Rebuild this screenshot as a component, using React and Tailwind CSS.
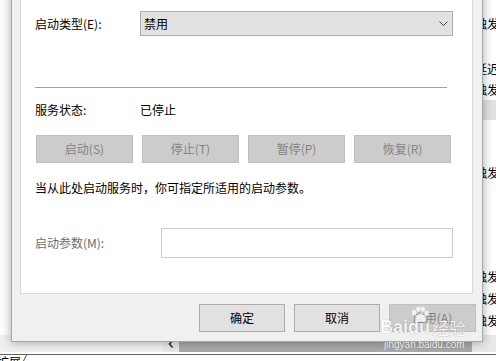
import React from "react";

function Btn({ children, disabled, className = "" }) {
  return (
    <div
      className={
        "flex items-center justify-center h-[28px] border leading-none " +
        (disabled
          ? "bg-[#cccccc] border-[#bfbfbf] text-[#838383] "
          : "bg-[#e1e1e1] border-[#adadad] text-black ") +
        className
      }
    >
      {children}
    </div>
  );
}

function ListRow({ h, text, className = "" }) {
  return (
    <div className={"flex items-center pl-[475px] whitespace-nowrap leading-none " + h + " " + className}>
      {text}
    </div>
  );
}

export default function App() {
  return (
    <div className="relative w-[496px] h-[361px] overflow-hidden bg-white text-[12px] text-black font-['Noto_Sans_CJK_SC',sans-serif]">
      {/* background window */}
      <div className="flex flex-col h-full">
        <div className="h-[335px] flex flex-col overflow-hidden">
          <div className="h-[13px] shrink-0" />
          <ListRow h="h-[22px] shrink-0" text="触发器启动)" />
          <div className="h-[23px] shrink-0" />
          <ListRow h="h-[22px] shrink-0" text="延迟启动)" />
          <ListRow h="h-[20px] shrink-0" text="触发器启动)" />
          <div className="h-[20px] shrink-0 ml-[472px] bg-[#e3e3e3]" />
          <div className="h-[42px] shrink-0" />
          <ListRow h="h-[22px] shrink-0" text="触发器启动)" />
          <div className="h-[82px] shrink-0" />
          <ListRow h="h-[22px] shrink-0" text="触发器启动)" />
          <ListRow h="h-[22px] shrink-0" text="触发器启动)" />
          <ListRow h="h-[21px] shrink-0" text="触发器启动)" />
        </div>
        {/* horizontal scrollbar */}
        <div className="h-[17px] flex shrink-0">
          <div className="w-[163px] bg-[#f0f0f0]" />
          <div className="w-[16px] bg-[#e8e8e8] flex items-end justify-center pb-[4px]">
            <svg width="6" height="8" viewBox="0 0 6 8">
              <path d="M4.5 0.5 L1.5 4 L4.5 7.5" stroke="#333" strokeWidth="1.6" fill="none" />
            </svg>
          </div>
          <div className="w-[293px] bg-[#a9a9a9]" />
          <div className="flex-1 bg-[#e8e8e8]" />
        </div>
        <div className="h-[2px] shrink-0 bg-white" />
        <div className="h-[1px] shrink-0 bg-[#646464]" />
        <div className="h-[6px] shrink-0 overflow-hidden flex items-start">
          <div className="ml-[-3px] mt-[1px] leading-[12px] text-[12px]">扩展</div>
          <svg width="6" height="6" className="ml-[2px]" viewBox="0 0 6 6">
            <path d="M0.5 6 L3.5 0" stroke="#444" strokeWidth="1" fill="none" />
          </svg>
        </div>
      </div>

      {/* dialog */}
      <div className="absolute left-[11px] top-[-40px] w-[472px] h-[382px] box-border border border-[#a8a8a8] bg-[#f0f0f0] shadow-[0_0_10px_rgba(0,0,0,0.35)] flex flex-col">
        <div className="ml-[8px] mr-[9px] mt-[9px] h-[324px] box-border border border-[#d9d9d9] bg-white pl-[14px] pr-[19px] pt-[40px] flex flex-col">
          {/* startup type */}
          <div className="flex items-center h-[25px]">
            <div className="w-[105px] leading-none">启动类型(E):</div>
            <div className="flex-1 h-[25px] box-border border border-[#adadad] bg-[#e1e1e1] flex items-center pl-[3px] pr-[4px]">
              <span className="flex-1 leading-none">禁用</span>
              <svg width="9" height="5" viewBox="0 0 9 5">
                <path d="M0.5 0.5 L4.5 4.5 L8.5 0.5" stroke="#444" strokeWidth="1" fill="none" />
              </svg>
            </div>
          </div>
          <div className="mt-[51px] h-[1px] w-[412px] bg-[#a0a0a0]" />
          {/* status */}
          <div className="mt-[14px] h-[16px] flex items-center">
            <div className="w-[105px] leading-none">服务状态:</div>
            <div className="leading-none">已停止</div>
          </div>
          <div className="mt-[17px] ml-[1px] w-[415px] grid grid-cols-4 gap-[9px]">
            <Btn disabled>启动(S)</Btn>
            <Btn disabled>停止(T)</Btn>
            <Btn disabled>暂停(P)</Btn>
            <Btn disabled>恢复(R)</Btn>
          </div>
          <div className="mt-[17px] h-[16px] flex items-center leading-none">
            当从此处启动服务时，你可指定所适用的启动参数。
          </div>
          <div className="mt-[32px] h-[30px] flex items-center">
            <div className="w-[126px] leading-none text-[#6d6d6d]">启动参数(M):</div>
            <div className="flex-1 h-[30px] box-border border border-[#cccccc] bg-white" />
          </div>
        </div>
        <div className="mt-[10px] pr-[6px] flex justify-end gap-[9px]">
          <Btn className="w-[86px]">确定</Btn>
          <Btn className="w-[86px]">取消</Btn>
          <Btn disabled className="w-[87px]">应用(A)</Btn>
        </div>
      </div>

      {/* watermark */}
      <div className="absolute left-[380px] top-[304px] w-[92px] h-[50px] pointer-events-none text-white">
        <svg width="20" height="17" viewBox="0 0 24 20" className="absolute left-[30px] top-[2px] opacity-80">
          <ellipse cx="5" cy="8" rx="2.6" ry="3.4" fill="white" />
          <ellipse cx="10" cy="3.5" rx="2.6" ry="3.2" fill="white" />
          <ellipse cx="15.5" cy="3.5" rx="2.6" ry="3.2" fill="white" />
          <ellipse cx="20" cy="8.5" rx="2.4" ry="3.2" fill="white" />
          <path d="M12.5 9 C9 9 6.5 13 6.5 16 C6.5 19 9.5 19 12.5 18.5 C15.5 19 18.5 19 18.5 16 C18.5 13 16 9 12.5 9 Z" fill="white" />
        </svg>
        <div className="absolute left-0 top-[14px] flex items-end whitespace-nowrap opacity-80 [text-shadow:0_0_1px_rgba(0,0,0,0.5)]">
          <span className="text-[18px] leading-none font-['Liberation_Sans',sans-serif] font-bold">Baidu</span>
          <span className="ml-[2px] text-[17px] leading-none">经验</span>
        </div>
        <div className="absolute left-[4px] top-[36px] text-[10px] leading-none font-['Liberation_Sans',sans-serif] whitespace-nowrap opacity-90 [text-shadow:0_0_1px_rgba(0,0,0,0.4)]">
          jingyan.baidu.com
        </div>
      </div>
    </div>
  );
}
